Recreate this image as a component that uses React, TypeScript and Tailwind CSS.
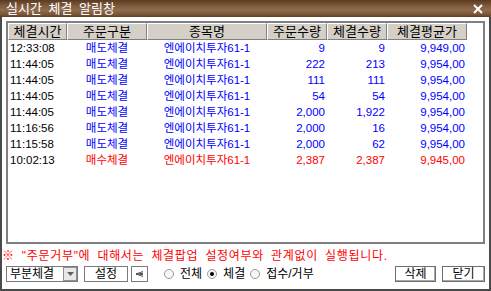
import React from "react";

const FONT = "font-['Liberation_Sans','Noto_Sans_CJK_KR',sans-serif]";

type Row = { t: string; kind: string; name: string; q: string; f: string; p: string; red?: boolean };

const rows: Row[] = [
  { t: "12:33:08", kind: "매도체결", name: "엔에이치투자61-1", q: "9", f: "9", p: "9,949,00" },
  { t: "11:44:05", kind: "매도체결", name: "엔에이치투자61-1", q: "222", f: "213", p: "9,954,00" },
  { t: "11:44:05", kind: "매도체결", name: "엔에이치투자61-1", q: "111", f: "111", p: "9,954,00" },
  { t: "11:44:05", kind: "매도체결", name: "엔에이치투자61-1", q: "54", f: "54", p: "9,954,00" },
  { t: "11:44:05", kind: "매도체결", name: "엔에이치투자61-1", q: "2,000", f: "1,922", p: "9,954,00" },
  { t: "11:16:56", kind: "매도체결", name: "엔에이치투자61-1", q: "2,000", f: "16", p: "9,954,00" },
  { t: "11:15:58", kind: "매도체결", name: "엔에이치투자61-1", q: "2,000", f: "62", p: "9,954,00" },
  { t: "10:02:13", kind: "매수체결", name: "엔에이치투자61-1", q: "2,387", f: "2,387", p: "9,945,00", red: true },
];

const headers = ["체결시간", "주문구분", "종목명", "주문수량", "체결수량", "체결평균가"];

function Radio({ checked, label }: { checked?: boolean; label: string }) {
  return (
    <div className="flex items-center">
      <div className="w-[10px] h-[10px] rounded-full border border-[#9a9a9a] bg-[#f6f6f6] flex items-center justify-center">
        {checked && <div className="w-[4px] h-[4px] rounded-full bg-black" />}
      </div>
      <span className="ml-[6px] text-[12px] leading-[16px] text-black">{label}</span>
    </div>
  );
}

export default function App() {
  return (
    <div className={`w-[491px] h-[291px] flex flex-col bg-white ${FONT}`}>
      <div className="h-[17px] flex items-center justify-between pl-[6px] pr-[8px] bg-[linear-gradient(to_bottom,#5a3a20_0%,#7e5b3d_35%,#8e6c4d_60%,#7a5638_85%,#5e3e24_100%)]">
        <span className="text-white text-[13px] leading-[17px] [word-spacing:3px]">실시간 체결 알림창</span>
        <svg width="10" height="10" viewBox="0 0 10 10">
          <path d="M1 1 L9 9 M9 1 L1 9" stroke="white" strokeWidth="2" />
        </svg>
      </div>
      <div className="flex-1 flex flex-col border-l-2 border-r-2 border-b-2 border-[#4a4a4a]">
        <div className="mx-[4px] mt-[4px] h-[223px] border-2 border-[#808080] bg-white overflow-hidden">
          <div className="grid grid-cols-[59px_80px_120px_60px_60px_80px_1fr] h-[17px]">
            {headers.map((h) => (
              <div
                key={h}
                className="bg-[#d4d0c8] border-t border-l border-white border-r border-b border-r-[#808080] border-b-[#808080] text-[13px] leading-[15px] text-center text-black whitespace-nowrap"
              >
                {h}
              </div>
            ))}
            <div className="bg-white" />
          </div>
          {rows.map((r, i) => {
            const c = r.red ? "text-[#ff0000]" : "text-[#0000ff]";
            return (
              <div
                key={i}
                className="grid grid-cols-[59px_80px_120px_60px_60px_80px_1fr] h-[16px] text-[11.5px] leading-[16px] whitespace-nowrap"
              >
                <div className="pl-[2px] text-black">{r.t}</div>
                <div className={`text-center ${c}`}>{r.kind}</div>
                <div className={`text-center ${c}`}>{r.name}</div>
                <div className={`text-right pr-[2px] ${c}`}>{r.q}</div>
                <div className={`text-right pr-[2px] ${c}`}>{r.f}</div>
                <div className={`text-right pr-[2px] ${c}`}>{r.p}</div>
                <div />
              </div>
            );
          })}
        </div>
        <div className="mt-[2px] h-[20px] flex items-center text-[12px] text-[#ff0000] whitespace-nowrap tracking-[0.7px] [word-spacing:3px]">
          ※ "주문거부"에 대해서는 체결팝업 설정여부와 관계없이 실행됩니다.
        </div>
        <div className="h-[16px] flex items-center px-[4px]">
          <div className="w-[72px] h-[16px] border border-[#7a7a7a] bg-white flex items-center justify-between">
            <span className="pl-[3px] text-[12px] leading-[14px] text-black">부분체결</span>
            <div className="w-[14px] h-[14px] bg-[#e8e8e8] border border-[#909090] flex items-center justify-center">
              <svg width="7" height="4" viewBox="0 0 7 4">
                <path d="M0 0 L7 0 L3.5 4 Z" fill="#606060" />
              </svg>
            </div>
          </div>
          <div className="ml-[6px] w-[44px] h-[16px] border border-[#7a7a7a] bg-white flex items-center justify-center text-[12px] leading-[14px] text-black">
            설정
          </div>
          <div className="ml-[3px] w-[17px] h-[16px] border border-[#7a7a7a] bg-white flex items-center justify-center">
            <svg width="9" height="6" viewBox="0 0 9 6">
              <path d="M8 0.5 L1 3 L8 5.5 M8 2 L4.5 3 L8 4 M1 3 L8 3" stroke="#404040" strokeWidth="0.9" fill="none" />
            </svg>
          </div>
          <div className="ml-[16px] flex items-center gap-[5px]">
            <Radio label="전체" />
            <Radio checked label="체결" />
            <Radio label="접수/거부" />
          </div>
          <div className="ml-auto flex items-center gap-[6px]">
            <div className="w-[41px] h-[16px] border border-[#6e6e6e] bg-white shadow-[inset_-1px_-1px_0_#a8a8a8] flex items-center justify-center text-[12px] leading-[14px] text-black">
              삭제
            </div>
            <div className="w-[43px] h-[16px] border border-[#6e6e6e] bg-white shadow-[inset_-1px_-1px_0_#a8a8a8] flex items-center justify-center text-[12px] leading-[14px] text-black">
              닫기
            </div>
          </div>
        </div>
      </div>
    </div>
  );
}
